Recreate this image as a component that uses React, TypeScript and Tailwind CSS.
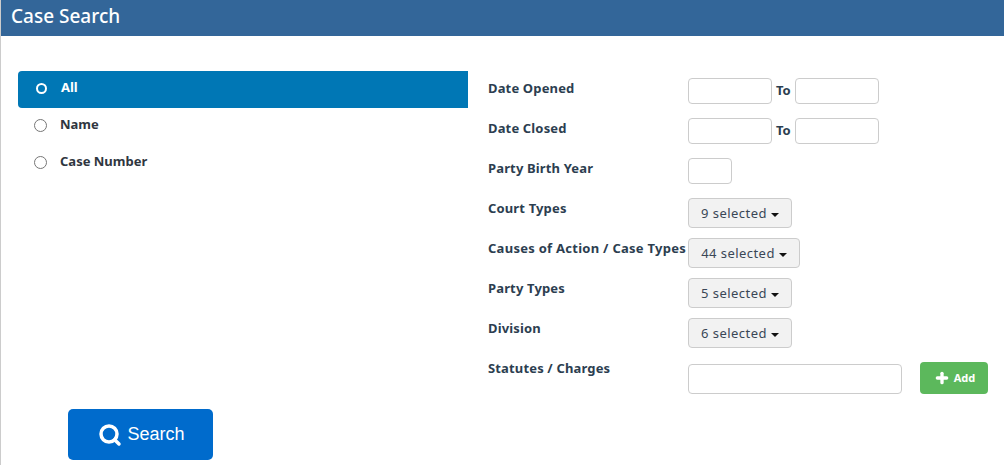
import { Plus, Search } from 'lucide-react'

const FONT = "font-['Noto_Sans','Open_Sans',sans-serif]"

const OPTIONS = ['All', 'Name', 'Case Number']

function Caret() {
  return <span className="ml-[4px] mt-[2px] inline-block border-x-[4px] border-t-[4px] border-x-transparent border-t-[#111]" />
}

function TextBox({ width }: { width: string }) {
  return <input className={`${width} h-[26px] rounded-[4px] border border-[#ccc] bg-white`} />
}

function Multi({ text, width }: { text: string; width: string }) {
  return (
    <button className={`${width} flex h-[30px] items-center justify-center rounded-[4px] border border-[#ccc] bg-[#f2f2f2] pt-[1px] text-[13px] tracking-[0.45px] text-[#3a4756]`}>
      {text}
      <Caret />
    </button>
  )
}

function Row({ label, tracking = 'tracking-[0.15px]', children }: { label: string; tracking?: string; children: React.ReactNode }) {
  return (
    <div className="flex h-[40px]">
      <div className={`w-[200px] shrink-0 whitespace-nowrap pt-[1px] text-[13px] leading-[18px] font-bold text-[#2c3e50] ${tracking}`}>{label}</div>
      <div className="flex items-start">{children}</div>
    </div>
  )
}

export default function App() {
  return (
    <div className={`${FONT} flex h-[465px] w-[1004px] flex-col overflow-hidden border-l border-[#ccc] bg-white`}>
      <div className="flex h-[36px] shrink-0 items-center bg-[#336699] pb-[3px] pl-[10px] text-[19px] font-medium text-white">Case Search</div>

      <div className="flex flex-1">
        {/* left column */}
        <div className="ml-[17px] mt-[35px] flex w-[450px] shrink-0 flex-col">
          {OPTIONS.map((o, i) => (
            <div
              key={o}
              className={`flex h-[37px] items-center pb-[3px] pl-[16px] text-[13px] font-bold ${i === 0 ? 'rounded-l-[4px] bg-[#0077b5] text-white' : 'text-[#2f3640]'}`}
            >
              {i === 0 ? (
                <span className="ml-[2px] h-[11px] w-[11px] rounded-full border-[2px] border-white bg-[#0077b5]" />
              ) : (
                <span className="h-[13px] w-[13px] rounded-full border border-[#767676] bg-white" />
              )}
              <span className={i === 0 ? 'ml-[14px]' : 'ml-[13px]'}>{o}</span>
            </div>
          ))}
          <button className="mt-[227px] ml-[50px] flex h-[51px] w-[145px] items-center justify-center gap-[5px] rounded-[5px] bg-[#006bcc] pl-[2px] font-['Liberation_Sans',sans-serif] text-[18px] text-white">
            <Search size={24} strokeWidth={3.5} />
            <span className="-mt-[1px]">Search</span>
          </button>
        </div>

        {/* right column */}
        <div className="ml-[20px] mt-[42px] flex flex-col">
          <Row label="Date Opened">
            <TextBox width="w-[84px]" />
            <span className="mx-[4px] mt-[3px] text-[13px] font-bold text-[#2c3e50]">To</span>
            <TextBox width="w-[84px]" />
          </Row>
          <Row label="Date Closed">
            <TextBox width="w-[84px]" />
            <span className="mx-[4px] mt-[3px] text-[13px] font-bold text-[#2c3e50]">To</span>
            <TextBox width="w-[84px]" />
          </Row>
          <Row label="Party Birth Year">
            <TextBox width="w-[44px]" />
          </Row>
          <Row label="Court Types">
            <Multi text="9 selected" width="w-[104px]" />
          </Row>
          <Row label="Causes of Action / Case Types" tracking="tracking-[0.27px]">
            <Multi text="44 selected" width="w-[112px]" />
          </Row>
          <Row label="Party Types">
            <Multi text="5 selected" width="w-[104px]" />
          </Row>
          <Row label="Division">
            <Multi text="6 selected" width="w-[104px]" />
          </Row>
          <Row label="Statutes / Charges">
            <input className="mt-[6px] h-[30px] w-[214px] rounded-[4px] border border-[#ccc] bg-white" />
            <button className="mt-[4px] ml-[18px] flex h-[32px] w-[68px] items-center justify-center gap-[4px] rounded-[4px] bg-[#5cb85c] pl-[1px] text-[11px] font-bold text-white">
              <Plus size={16} strokeWidth={5} />
              Add
            </button>
          </Row>
        </div>
      </div>
    </div>
  )
}
